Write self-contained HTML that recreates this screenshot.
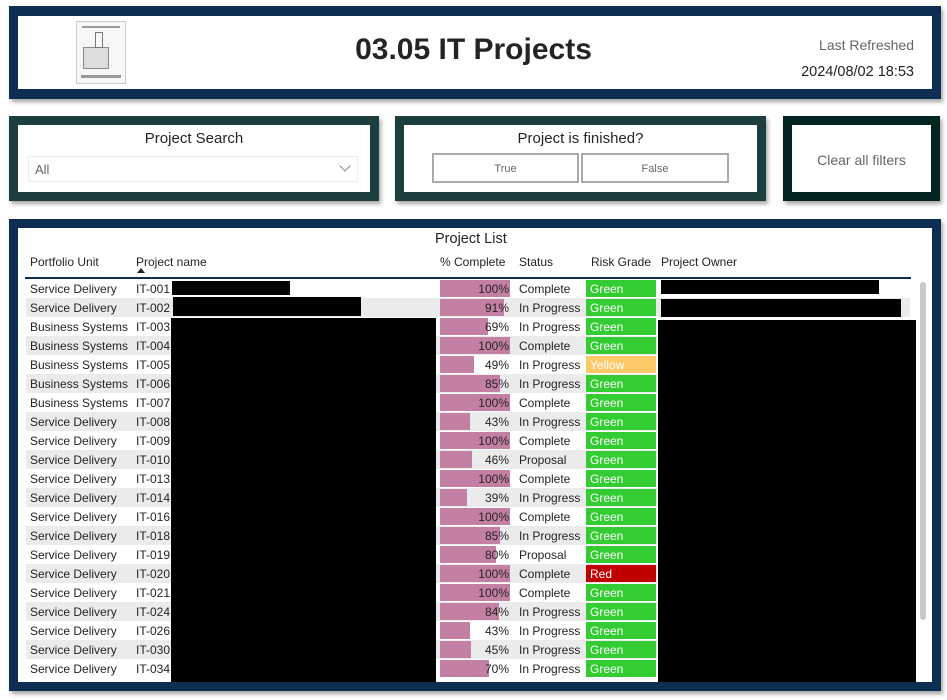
<!DOCTYPE html>
<html><head><meta charset="utf-8"><style>
*{box-sizing:border-box;margin:0;padding:0}
body{width:947px;height:700px;background:#fff;position:relative;overflow:hidden;font-family:"Liberation Sans",sans-serif;color:#252423}
.a{position:absolute}
.box{position:absolute;box-shadow:2px 3px 4px rgba(0,0,0,.35)}
.in{position:absolute;background:#fff}
.r{position:absolute;left:26px;width:884px;height:19px;font-size:12px;line-height:20px}
.r.g{background:#ebebeb}
.r span{position:absolute;top:0;white-space:nowrap}
.bar{position:absolute;left:414px;top:1px;height:17px;background:#c47fa5}
.pc{left:414px;width:70px;text-align:right;padding-right:1px}
.st{left:493px}
.rk{left:560px;width:70px;top:1px!important;height:17px;line-height:18px;color:#fff;padding-left:4px;background:#33cc33}
.h{position:absolute;top:255px;font-size:12px;color:#252423}
</style></head><body>
<div class="box" style="left:9px;top:6px;width:932px;height:93px;background:#0d2d52"><div class="in" style="left:9px;top:10px;width:914px;height:73px"></div></div>
<div class="a" style="left:76px;top:21px;width:50px;height:63px;border:1px solid #ccc;background:#f7f7f7">
<div class="a" style="left:5px;top:4px;width:38px;height:2px;background:#999"></div>
<div class="a" style="left:6px;top:25px;width:26px;height:22px;border:1px solid #888;background:#ddd"></div>
<div class="a" style="left:18px;top:10px;width:8px;height:16px;border:1px solid #777"></div>
<div class="a" style="left:4px;top:53px;width:40px;height:3px;background:#999"></div></div>
<div class="a" style="left:0;width:947px;top:33px;text-align:center;font-size:30px;font-weight:bold;color:#252423">03.05 IT Projects</div>
<div class="a" style="right:33px;top:37px;font-size:14px;color:#666">Last Refreshed</div>
<div class="a" style="right:33px;top:64px;font-size:14.5px;color:#252423">2024/08/02 18:53</div>

<div class="box" style="left:9px;top:116px;width:370px;height:85px;background:#1b3f3f"><div class="in" style="left:9px;top:9px;width:352px;height:67px"></div></div>
<div class="a" style="left:9px;width:370px;top:130px;text-align:center;font-size:15px">Project Search</div>
<div class="a" style="left:28px;top:156px;width:330px;height:26px;border:1px solid #eee;font-size:13px;color:#666;line-height:26px;padding-left:6px">All<span class="a" style="right:8px;top:5px;width:8px;height:8px;border-right:1px solid #888;border-bottom:1px solid #888;transform:rotate(45deg)"></span></div>

<div class="box" style="left:395px;top:116px;width:371px;height:85px;background:#1b3f3f"><div class="in" style="left:9px;top:9px;width:353px;height:67px"></div></div>
<div class="a" style="left:395px;width:371px;top:130px;text-align:center;font-size:15px">Project is finished?</div>
<div class="a" style="left:432px;top:153px;width:147px;height:30px;border:2px solid #aaa;font-size:11px;color:#666;text-align:center;line-height:29px">True</div>
<div class="a" style="left:581px;top:153px;width:148px;height:30px;border:2px solid #aaa;font-size:11px;color:#666;text-align:center;line-height:29px">False</div>

<div class="box" style="left:783px;top:116px;width:157px;height:85px;background:#032522"><div class="in" style="left:9px;top:9px;width:139px;height:67px"></div></div>
<div class="a" style="left:783px;width:157px;top:152px;text-align:center;font-size:14px;color:#666">Clear all filters</div>

<div class="box" style="left:9px;top:219px;width:932px;height:472px;background:#0d2d52"><div class="in" style="left:9px;top:9px;width:914px;height:454px"></div></div>
<div class="a" style="left:435px;top:231px;font-size:14.5px">Project List</div>
<div class="h" style="left:30px">Portfolio Unit</div>
<div class="h" style="left:136px">Project name</div>
<div class="a" style="left:137px;top:268px;width:0;height:0;border-left:4px solid transparent;border-right:4px solid transparent;border-bottom:5px solid #252423"></div>
<div class="h" style="left:440px">% Complete</div>
<div class="h" style="left:519px">Status</div>
<div class="h" style="left:591px">Risk Grade</div>
<div class="h" style="left:661px">Project Owner</div>
<div class="a" style="left:25px;top:277px;width:886px;height:2px;background:#0d2d52"></div>
<div class="a" style="left:920px;top:282px;width:6px;height:338px;background:#c8c8c8;border-radius:3px"></div>

<div class="r" style="top:279px"><div class="bar" style="width:70px"></div><span style="left:4px">Service Delivery</span><span style="left:110px">IT-001</span><span class="pc">100%</span><span class="st">Complete</span><span class="rk">Green</span></div>
<div class="r g" style="top:298px"><div class="bar" style="width:64px"></div><span style="left:4px">Service Delivery</span><span style="left:110px">IT-002</span><span class="pc">91%</span><span class="st">In Progress</span><span class="rk">Green</span></div>
<div class="r" style="top:317px"><div class="bar" style="width:48px"></div><span style="left:4px">Business Systems</span><span style="left:110px">IT-003</span><span class="pc">69%</span><span class="st">In Progress</span><span class="rk">Green</span></div>
<div class="r g" style="top:336px"><div class="bar" style="width:70px"></div><span style="left:4px">Business Systems</span><span style="left:110px">IT-004</span><span class="pc">100%</span><span class="st">Complete</span><span class="rk">Green</span></div>
<div class="r" style="top:355px"><div class="bar" style="width:34px"></div><span style="left:4px">Business Systems</span><span style="left:110px">IT-005</span><span class="pc">49%</span><span class="st">In Progress</span><span class="rk" style="background:#fec966">Yellow</span></div>
<div class="r g" style="top:374px"><div class="bar" style="width:60px"></div><span style="left:4px">Business Systems</span><span style="left:110px">IT-006</span><span class="pc">85%</span><span class="st">In Progress</span><span class="rk">Green</span></div>
<div class="r" style="top:393px"><div class="bar" style="width:70px"></div><span style="left:4px">Business Systems</span><span style="left:110px">IT-007</span><span class="pc">100%</span><span class="st">Complete</span><span class="rk">Green</span></div>
<div class="r g" style="top:412px"><div class="bar" style="width:30px"></div><span style="left:4px">Service Delivery</span><span style="left:110px">IT-008</span><span class="pc">43%</span><span class="st">In Progress</span><span class="rk">Green</span></div>
<div class="r" style="top:431px"><div class="bar" style="width:70px"></div><span style="left:4px">Service Delivery</span><span style="left:110px">IT-009</span><span class="pc">100%</span><span class="st">Complete</span><span class="rk">Green</span></div>
<div class="r g" style="top:450px"><div class="bar" style="width:32px"></div><span style="left:4px">Service Delivery</span><span style="left:110px">IT-010</span><span class="pc">46%</span><span class="st">Proposal</span><span class="rk">Green</span></div>
<div class="r" style="top:469px"><div class="bar" style="width:70px"></div><span style="left:4px">Service Delivery</span><span style="left:110px">IT-013</span><span class="pc">100%</span><span class="st">Complete</span><span class="rk">Green</span></div>
<div class="r g" style="top:488px"><div class="bar" style="width:27px"></div><span style="left:4px">Service Delivery</span><span style="left:110px">IT-014</span><span class="pc">39%</span><span class="st">In Progress</span><span class="rk">Green</span></div>
<div class="r" style="top:507px"><div class="bar" style="width:70px"></div><span style="left:4px">Service Delivery</span><span style="left:110px">IT-016</span><span class="pc">100%</span><span class="st">Complete</span><span class="rk">Green</span></div>
<div class="r g" style="top:526px"><div class="bar" style="width:60px"></div><span style="left:4px">Service Delivery</span><span style="left:110px">IT-018</span><span class="pc">85%</span><span class="st">In Progress</span><span class="rk">Green</span></div>
<div class="r" style="top:545px"><div class="bar" style="width:56px"></div><span style="left:4px">Service Delivery</span><span style="left:110px">IT-019</span><span class="pc">80%</span><span class="st">Proposal</span><span class="rk">Green</span></div>
<div class="r g" style="top:564px"><div class="bar" style="width:70px"></div><span style="left:4px">Service Delivery</span><span style="left:110px">IT-020</span><span class="pc">100%</span><span class="st">Complete</span><span class="rk" style="background:#c00000">Red</span></div>
<div class="r" style="top:583px"><div class="bar" style="width:70px"></div><span style="left:4px">Service Delivery</span><span style="left:110px">IT-021</span><span class="pc">100%</span><span class="st">Complete</span><span class="rk">Green</span></div>
<div class="r g" style="top:602px"><div class="bar" style="width:59px"></div><span style="left:4px">Service Delivery</span><span style="left:110px">IT-024</span><span class="pc">84%</span><span class="st">In Progress</span><span class="rk">Green</span></div>
<div class="r" style="top:621px"><div class="bar" style="width:30px"></div><span style="left:4px">Service Delivery</span><span style="left:110px">IT-026</span><span class="pc">43%</span><span class="st">In Progress</span><span class="rk">Green</span></div>
<div class="r g" style="top:640px"><div class="bar" style="width:31px"></div><span style="left:4px">Service Delivery</span><span style="left:110px">IT-030</span><span class="pc">45%</span><span class="st">In Progress</span><span class="rk">Green</span></div>
<div class="r" style="top:659px"><div class="bar" style="width:49px"></div><span style="left:4px">Service Delivery</span><span style="left:110px">IT-034</span><span class="pc">70%</span><span class="st">In Progress</span><span class="rk">Green</span></div>

<div class="a" style="left:172px;top:281px;width:118px;height:14px;background:#000"></div>
<div class="a" style="left:173px;top:297px;width:188px;height:19px;background:#000"></div>
<div class="a" style="left:171px;top:318px;width:265px;height:364px;background:#000"></div>
<div class="a" style="left:661px;top:280px;width:218px;height:14px;background:#000"></div>
<div class="a" style="left:661px;top:299px;width:240px;height:18px;background:#000"></div>
<div class="a" style="left:658px;top:320px;width:258px;height:362px;background:#000"></div>
</body></html>
